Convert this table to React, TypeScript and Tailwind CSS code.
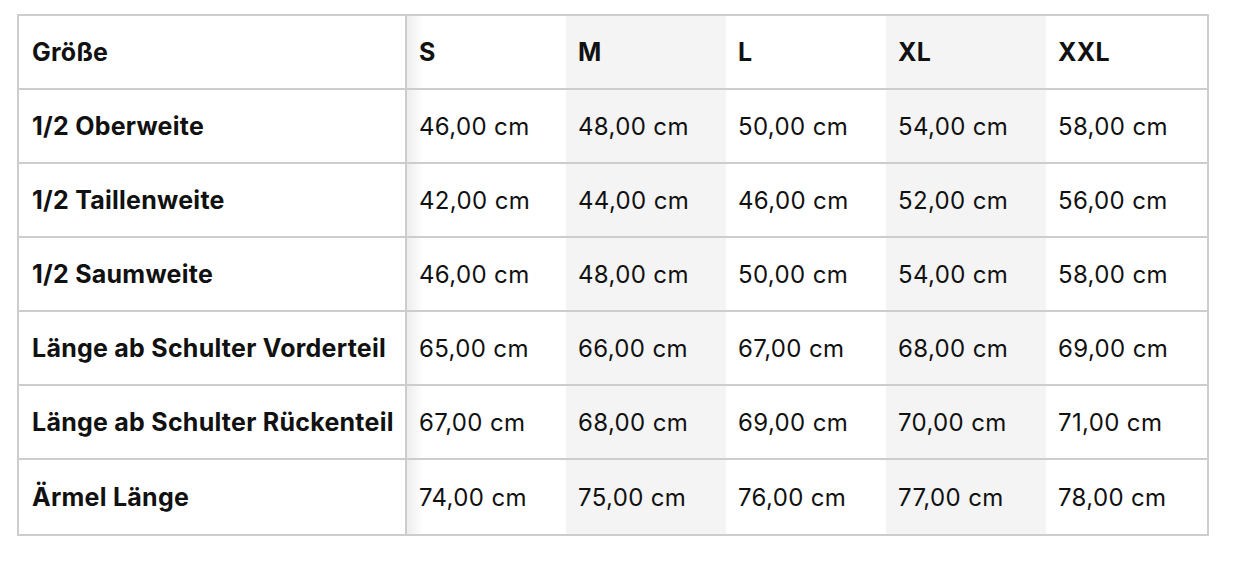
const sizes = ["S", "M", "L", "XL", "XXL"];

const rows: [string, string[]][] = [
  ["1/2 Oberweite", ["46,00", "48,00", "50,00", "54,00", "58,00"]],
  ["1/2 Taillenweite", ["42,00", "44,00", "46,00", "52,00", "56,00"]],
  ["1/2 Saumweite", ["46,00", "48,00", "50,00", "54,00", "58,00"]],
  ["Länge ab Schulter Vorderteil", ["65,00", "66,00", "67,00", "68,00", "69,00"]],
  ["Länge ab Schulter Rückenteil", ["67,00", "68,00", "69,00", "70,00", "71,00"]],
  ["Ärmel Länge", ["74,00", "75,00", "76,00", "77,00", "78,00"]],
];

const cellBg = (i: number) => {
  if (i === 0) return "bg-[linear-gradient(to_right,rgba(0,0,0,0.07),rgba(0,0,0,0)_16px)]";
  if (i === 1 || i === 3) return "bg-[#f4f4f4]";
  return "bg-white";
};

export default function App() {
  return (
    <div className="min-h-[562px] w-[1248px] bg-white pl-[17px] pt-[14px] font-['Inter',sans-serif] text-[#111]">
      <table className="w-[1192px] table-fixed border-collapse border-2 border-[#cdcdcd]">
        <colgroup>
          <col className="w-[388px]" />
          <col className="w-[160px]" />
          <col className="w-[160px]" />
          <col className="w-[160px]" />
          <col className="w-[160px]" />
          <col className="w-[162px]" />
        </colgroup>
        <thead>
          <tr className="h-[74px]">
            <th className="border-r-2 border-[#cdcdcd] pl-[13px] pt-[2px] text-left text-[25px] font-bold tracking-[0.01em]">Größe</th>
            {sizes.map((s, i) => (
              <th key={s} className={`pl-[12px] pt-[2px] text-left text-[25px] font-bold tracking-[0.01em] ${cellBg(i)}`}>
                {s}
              </th>
            ))}
          </tr>
        </thead>
        <tbody>
          {rows.map(([label, vals], r) => (
            <tr key={label} className={`${r === rows.length - 1 ? "h-[76px]" : "h-[74px]"} border-t-2 border-[#cdcdcd]`}>
              <td className="border-r-2 border-[#cdcdcd] pl-[13px] pt-[2px] text-[25px] font-bold tracking-[0.01em] whitespace-nowrap">{label}</td>
              {vals.map((v, i) => (
                <td key={i} className={`pl-[12px] pt-[2px] text-[24px] tracking-[0.015em] ${cellBg(i)}`}>
                  {v} cm
                </td>
              ))}
            </tr>
          ))}
        </tbody>
      </table>
    </div>
  );
}
